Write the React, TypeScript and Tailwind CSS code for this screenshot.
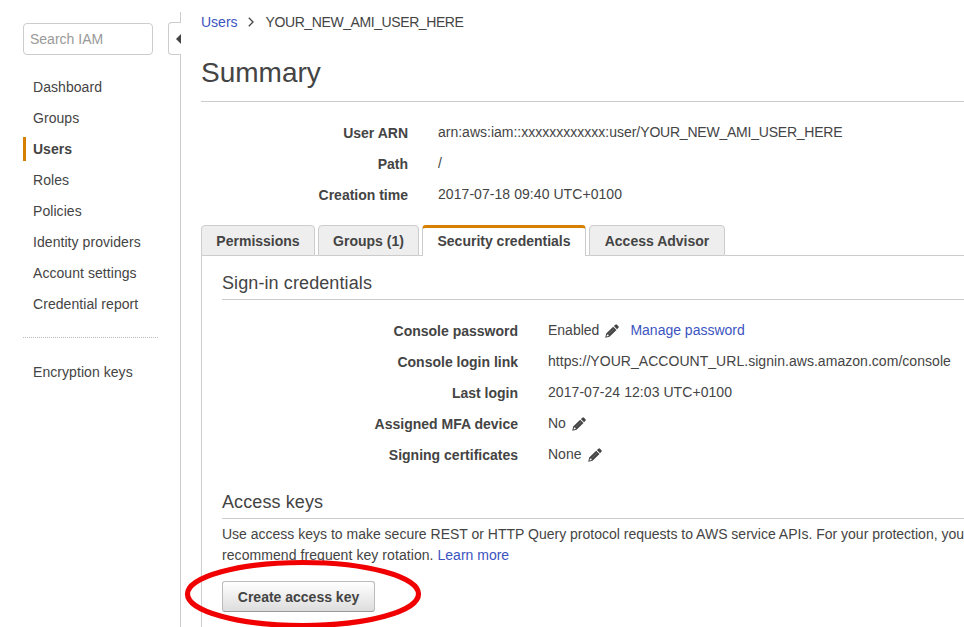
const navItems = [
  'Dashboard',
  'Groups',
  'Users',
  'Roles',
  'Policies',
  'Identity providers',
  'Account settings',
  'Credential report',
];

function Pencil() {
  return (
    <svg width="14" height="14" viewBox="0 0 14 14" className="shrink-0" fill="#444">
      <path d="M8.9 2.1 10.4.7Q11.2 0 12 .8L13.4 2.2Q14.2 3 13.4 3.8L12 5.2Z" />
      <path fillRule="evenodd" d="M8.2 2.7 11.5 6 4.5 12.7.2 13.8 1.2 9.500ZM2 10.5 1.5 12.5 3.6 12 3.5 10.7Z" />
      <path d="M3.4 10.3 9 4.900" stroke="#888" strokeWidth=".6" fill="none" />
    </svg>
  );
}

function Row({ label, wide, children }: { label: string; wide?: boolean; children: React.ReactNode }) {
  return (
    <div className="flex h-[31px] items-center">
      <div className={`${wide ? 'w-[296px]' : 'w-[207px]'} shrink-0 pt-0.5 text-right font-bold`}>{label}</div>
      <div className="ml-[30px] flex items-center">{children}</div>
    </div>
  );
}

function Tab({ label, width, active }: { label: string; width: string; active?: boolean }) {
  return (
    <div
      className={`${width} flex h-[31px] shrink-0 items-center justify-center whitespace-nowrap rounded-t-[4px] font-bold ${
        active
          ? 'border-x border-t-[3px] border-x-[#ccc] border-t-[#d58000] bg-white pb-0.5'
          : 'border border-[#ccc] bg-[#eee] pt-0.5'
      }`}
    >
      {label}
    </div>
  );
}

export default function App() {
  return (
    <div className="relative flex h-[627px] w-[964px] overflow-hidden bg-white font-['Liberation_Sans',Arial,sans-serif] text-[14px] leading-[21px] text-[#444] whitespace-nowrap">
      <aside className="w-[168px] shrink-0 pl-[23px] pt-[23px]">
        <div className="flex h-8 w-[130px] items-center rounded-[4px] border border-[#ccc] pl-1.5 text-[#999]">Search IAM</div>
        <nav className="pt-[17px]">
          {navItems.map((item) => (
            <div key={item} className="flex h-[31px] items-start pt-[3px]">
              <div
                className={`flex h-6 items-center border-l-[3px] pl-[7px] pt-px ${
                  item === 'Users' ? 'border-[#d58000] font-bold' : 'border-transparent tracking-[0.06px]'
                }`}
              >
                {item}
              </div>
            </div>
          ))}
        </nav>
        <div className="mt-[17px] w-[135px] border-t border-dotted border-[#bbb]" />
        <div className="pl-2.5 pt-6 tracking-[0.06px]">Encryption keys</div>
      </aside>

      <div className="flex w-[13px] shrink-0 flex-col pt-3">
        <div className="h-2.5 border-r border-[#ccc]" />
        <div className="flex h-[33px] items-center justify-end rounded-l-[4px] border border-r-0 border-[#ccc]">
          <svg width="5" height="10" viewBox="0 0 5 10" fill="#444">
            <path d="M5 0V10L0 5Z" />
          </svg>
        </div>
        <div className="flex-1 border-r border-[#ccc]" />
      </div>

      <main className="ml-5 flex w-[763px] shrink-0 flex-col overflow-hidden">
        <div className="flex h-[43px] items-center pt-px">
          <span className="text-[#3b54c0]">Users</span>
          <svg width="6" height="10" viewBox="0 0 6 10" className="ml-[10px] mr-[12px]" fill="none" stroke="#444" strokeWidth="1.3">
            <path d="M.8 .8 5 5 .8 9.2" />
          </svg>
          <span className="tracking-[-0.41px]">YOUR_NEW_AMI_USER_HERE</span>
        </div>
        <h1 className="flex h-[59px] items-center border-b border-[#ccc] text-[28px]">Summary</h1>
        <section className="pt-[15px]">
          <Row label="User ARN">
            <span>arn:aws:iam::xxxxxxxxxxxx:user/</span>
            <span className="tracking-[-0.22px]">YOUR_NEW_AMI_USER_HERE</span>
          </Row>
          <Row label="Path">/</Row>
          <Row label="Creation time">
            <span className="tracking-[0.06px]">2017-07-18 09:40 UTC+0100</span>
          </Row>
        </section>

        <div className="mt-[15px] flex h-[31px]">
          <Tab label="Permissions" width="w-[114px]" />
          <div className="w-[3px] border-b border-[#ccc]" />
          <Tab label="Groups (1)" width="w-[101px]" />
          <div className="w-[3px] border-b border-[#ccc]" />
          <Tab label="Security credentials" width="w-[164px]" active />
          <div className="w-[3px] border-b border-[#ccc]" />
          <Tab label="Access Advisor" width="w-[136px]" />
          <div className="flex-1 border-b border-[#ccc]" />
        </div>

        <div className="flex-1 border-l border-[#ccc] pl-5">
          <h2 className="flex h-11 items-center border-b border-[#ccc] pt-3 text-[18px] tracking-[0.1px]">Sign-in credentials</h2>
          <section className="pt-[15px]">
            <Row label="Console password" wide>
              Enabled
              <span className="ml-1.5 mr-[11px] pt-px"><Pencil /></span>
              <span className="text-[#3b54c0]">Manage password</span>
            </Row>
            <Row label="Console login link" wide>
              <span className="tracking-[0.04px]">https://YOUR_ACCOUNT_URL.signin.aws.amazon.com/console</span>
            </Row>
            <Row label="Last login" wide>
              <span className="tracking-[0.06px]">2017-07-24 12:03 UTC+0100</span>
            </Row>
            <Row label="Assigned MFA device" wide>
              No
              <span className="ml-1.5 pt-px"><Pencil /></span>
            </Row>
            <Row label="Signing certificates" wide>
              None
              <span className="ml-[7px] pt-px"><Pencil /></span>
            </Row>
          </section>
          <h2 className="mt-[15px] flex h-[34px] items-center border-b border-[#ccc] pt-0.5 text-[18px] tracking-[0.1px]">Access keys</h2>
          <p className="pt-[5px]">
            Use access keys to make secure REST or HTTP Query protocol requests to AWS service APIs. For your protection, you
            <br />
            <span className="tracking-[0.07px]">recommend frequent key rotation. </span>
            <span className="text-[#3b54c0]">Learn more</span>
          </p>
          <button className="mt-[15px] flex h-[31px] w-[153px] items-center justify-center rounded-[3px] border border-[#bbb] border-b-[#999] bg-linear-to-b from-white to-[#ddd] pt-0.5 font-bold">
            Create access key
          </button>
        </div>
      </main>

      <svg className="pointer-events-none absolute left-[180px] top-[555px]" width="250" height="72" viewBox="0 0 250 72" fill="none">
        <ellipse cx="123" cy="39" rx="115.500" ry="31.500" stroke="#f00000" strokeWidth="5.200" />
      </svg>
    </div>
  );
}
